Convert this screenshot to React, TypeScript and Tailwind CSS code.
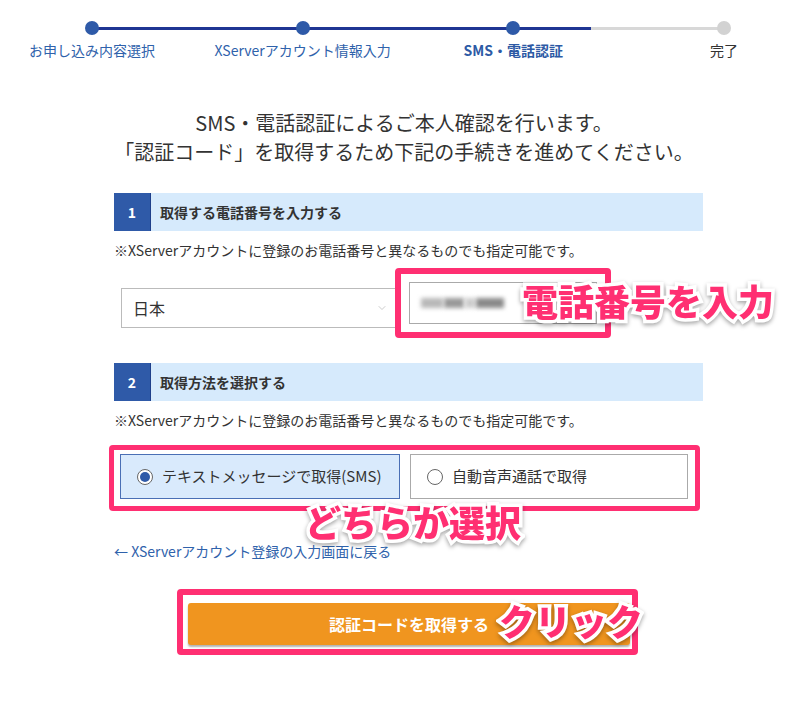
import { ChevronDown } from 'lucide-react';

const FONT = { fontFamily: '"Noto Sans CJK JP", "Noto Sans", sans-serif' };

const steps = [
  { label: 'お申し込み内容選択', state: 'done' },
  { label: 'XServerアカウント情報入力', state: 'done' },
  { label: 'SMS・電話認証', state: 'current' },
  { label: '完了', state: 'todo' },
];

const annotation =
  'absolute whitespace-nowrap font-black text-[#ff2f72] [-webkit-text-stroke:7px_white] [paint-order:stroke_fill] drop-shadow-[0_2px_2px_rgba(0,0,0,0.35)] leading-none';

const Progress = () => (
  <div className="relative ml-[85px] pt-[21px] w-[646px]">
    <div className="absolute left-[7px] top-[27px] h-[3px] w-[499px] bg-[#1f3593]" />
    <div className="absolute left-[506px] top-[27px] h-[3px] w-[133px] bg-[#d8d8d8]" />
    <div className="relative flex justify-between">
      {steps.map(s => (
        <div key={s.label} className="flex w-[14px] flex-col items-center">
          <div
            className={
              s.state === 'todo'
                ? 'h-[14px] w-[14px] rounded-full bg-[#d2d2d2]'
                : 'h-[14px] w-[14px] rounded-full bg-[#2e5aa8]'
            }
          />
          <span
            className={
              s.state === 'current'
                ? 'mt-[7px] whitespace-nowrap text-[14px] leading-[16px] font-bold text-[#2d5aa5]'
                : s.state === 'todo'
                  ? 'mt-[7px] whitespace-nowrap text-[14px] leading-[16px] text-[#333]'
                  : 'mt-[7px] whitespace-nowrap text-[14px] leading-[16px] text-[#2f62ab]'
            }
          >
            {s.label}
          </span>
        </div>
      ))}
    </div>
  </div>
);

const SectionHeader = ({ num, title }: { num: string; title: string }) => (
  <div className="flex h-[38px] items-stretch bg-[#d6eafc]">
    <div className="flex w-[37px] items-center justify-center border-r border-[#1e3f8a] bg-[#2f5aa8] text-[14px] font-bold text-white">
      {num}
    </div>
    <div className="flex items-center pl-[9px] text-[14px] font-bold text-[#333]">{title}</div>
  </div>
);

const Radio = ({ checked }: { checked?: boolean }) => (
  <span className="flex h-[16px] w-[16px] items-center justify-center rounded-full border border-[#666] bg-white">
    {checked && <span className="h-[10px] w-[10px] rounded-full bg-[#2f5aa8]" />}
  </span>
);

export default function App() {
  return (
    <div className="relative h-[701px] w-[790px] overflow-hidden bg-white text-[#333]" style={FONT}>
      <Progress />

      <div className="mt-[50px] pl-[18px] text-center text-[20px] leading-[29px] text-[#333]">
        <p>SMS・電話認証によるご本人確認を行います。</p>
        <p>「認証コード」を取得するため下記の手続きを進めてください。</p>
      </div>

      <div className="ml-[114px] w-[589px]">
        <div className="mt-[27px]">
          <SectionHeader num="1" title="取得する電話番号を入力する" />
        </div>
        <p className="mt-[10px] text-[14px] leading-[18px]">
          ※XServerアカウントに登録のお電話番号と異なるものでも指定可能です。
        </p>
        <div className="mt-[9px] flex items-start">
          <div className="ml-[7px] mt-[20px] flex h-[40px] w-[276px] items-center justify-between border border-[#bbb] bg-white pl-[11px] pr-[8px] text-[16px]">
            <span>日本</span>
            <ChevronDown size={12} strokeWidth={1.2} className="text-[#aaa]" />
          </div>
          <div className="ml-[-2px] rounded-[4px] border-[6px] border-[#ff2f72] p-[8px]">
            <div className="flex h-[42px] w-[188px] items-center gap-[1px] border border-[#aaa] bg-white pl-[11px]">
              <span className="h-[10px] w-[22px] bg-[#b8b8b8] blur-[2px]" />
              <span className="h-[10px] w-[20px] bg-[#999] blur-[2px]" />
              <span className="h-[10px] w-[10px] bg-[#ccc] blur-[2px]" />
              <span className="h-[10px] w-[28px] bg-[#8a8a8a] blur-[2px]" />
            </div>
          </div>
        </div>

        <div className="mt-[25px]">
          <SectionHeader num="2" title="取得方法を選択する" />
        </div>
        <p className="mt-[10px] text-[14px] leading-[18px]">
          ※XServerアカウントに登録のお電話番号と異なるものでも指定可能です。
        </p>
        <div className="ml-[-5px] mt-[16px] w-[591px] rounded-[4px] border-[5px] border-[#ff2f72] px-[6px] pt-[4px] pb-[7px]">
          <div className="flex gap-[10px]">
            <label className="flex h-[45px] w-[280px] items-center gap-[9px] border border-[#4a6fb5] bg-[#d9eafc] pl-[16px] text-[15px]">
              <Radio checked />
              <span>テキストメッセージで取得(SMS)</span>
            </label>
            <label className="flex h-[45px] w-[278px] items-center gap-[9px] border border-[#aaa] bg-white pl-[16px] text-[15px]">
              <Radio />
              <span>自動音声通話で取得</span>
            </label>
          </div>
        </div>

        <a className="mt-[31px] block text-[14px] leading-[18px] text-[#2f62ab]">← XServerアカウント登録の入力画面に戻る</a>

        <div className="ml-[63px] mt-[29px] w-[461px] rounded-[4px] border-[6px] border-[#ff2f72] pl-[5px] pt-[8px] pb-[4px]">
          <button className="flex h-[42px] w-[442px] items-center justify-center rounded-[3px] bg-[#f0951f] text-[16px] font-bold text-white shadow-[0_2px_2px_rgba(0,0,0,0.3)]">
            認証コードを取得する
          </button>
        </div>
      </div>

      <span className={annotation + ' left-[522px] top-[282px] text-[36px]'}>電話番号を入力</span>
      <span className={annotation + ' left-[305px] top-[503px] text-[36px]'}>どちらか選択</span>
      <span className={annotation + ' left-[499px] top-[602px] text-[36px]'}>クリック</span>
    </div>
  );
}
